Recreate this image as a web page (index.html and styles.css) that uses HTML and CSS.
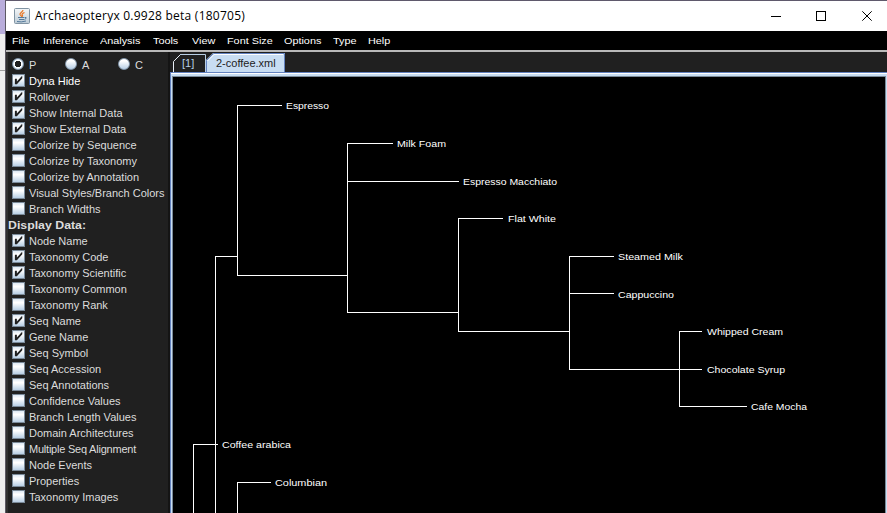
FILE: index.html
```
<!DOCTYPE html>
<html lang="en">
<head>
<meta charset="utf-8">
<title>Archaeopteryx 0.9928 beta (180705)</title>
<link rel="stylesheet" href="styles.css">
</head>
<body>
<div class="desktop"></div>
<div class="window">
  <header class="titlebar">
    <svg class="logo" width="16" height="16" viewBox="0 0 16 16">
      <defs><linearGradient id="lg" x1="0" y1="0" x2="0" y2="1"><stop offset="0" stop-color="#f4f6f7"/><stop offset="1" stop-color="#bccbd6"/></linearGradient></defs>
      <rect x=".5" y=".5" width="15" height="15" rx="1" fill="url(#lg)" stroke="#8194a3"/>
      <path d="M9 2C9 4 5.500 4.500 6 6.500L8 9M10.500 4.500C8 5.500 7.500 6.500 8.500 7.500L8 9" fill="none" stroke="#e87522" stroke-width="1.200"/>
      <path d="M4 9.500H10M5 11.500H10M3 13.500Q7 14.500 12 13M10.500 9.500Q13 9 12 10.500L10.500 11.500" fill="none" stroke="#557a9b"/>
    </svg>
    <span class="title">Archaeopteryx 0.9928 beta (180705)</span>
    <svg class="controls" width="110" height="12" viewBox="0 0 110 12" fill="none" stroke="#000">
      <path d="M4 6.500H14M49.500 1.500H58.500V10.500H49.500Z" shape-rendering="crispEdges"/>
      <path d="M95.300 1.300L104.700 10.700M104.700 1.300L95.300 10.700"/>
    </svg>
  </header>
  <nav class="menu"><span class="m1">File</span><span class="m2">Inference</span><span class="m3">Analysis</span><span class="m4">Tools</span><span class="m5">View</span><span class="m6">Font Size</span><span class="m7">Options</span><span class="m8">Type</span><span>Help</span></nav>
  <main class="body">
    <aside class="panel">
      <div class="radios"><label><i class="radio on"></i>P</label><label><i class="radio"></i>A</label><label><i class="radio"></i>C</label></div>
      <div class="row hot on"><i class="box"></i>Dyna Hide</div>
      <div class="row on"><i class="box"></i>Rollover</div>
      <div class="row on"><i class="box"></i>Show Internal Data</div>
      <div class="row on"><i class="box"></i>Show External Data</div>
      <div class="row"><i class="box"></i>Colorize by Sequence</div>
      <div class="row"><i class="box"></i>Colorize by Taxonomy</div>
      <div class="row"><i class="box"></i>Colorize by Annotation</div>
      <div class="row"><i class="box"></i>Visual Styles/Branch Colors</div>
      <div class="row"><i class="box"></i>Branch Widths</div>
      <h2>Display Data:</h2>
      <div class="row on"><i class="box"></i>Node Name</div>
      <div class="row on"><i class="box"></i>Taxonomy Code</div>
      <div class="row on"><i class="box"></i>Taxonomy Scientific</div>
      <div class="row"><i class="box"></i>Taxonomy Common</div>
      <div class="row"><i class="box"></i>Taxonomy Rank</div>
      <div class="row on"><i class="box"></i>Seq Name</div>
      <div class="row on"><i class="box"></i>Gene Name</div>
      <div class="row on"><i class="box"></i>Seq Symbol</div>
      <div class="row"><i class="box"></i>Seq Accession</div>
      <div class="row"><i class="box"></i>Seq Annotations</div>
      <div class="row"><i class="box"></i>Confidence Values</div>
      <div class="row"><i class="box"></i>Branch Length Values</div>
      <div class="row"><i class="box"></i>Domain Architectures</div>
      <div class="row tight"><i class="box"></i>Multiple Seq Alignment</div>
      <div class="row"><i class="box"></i>Node Events</div>
      <div class="row"><i class="box"></i>Properties</div>
      <div class="row"><i class="box"></i>Taxonomy Images</div>
    </aside>
    <section class="work">
      <div class="tabs">
        <div class="tab first"><svg width="36" height="18" viewBox="0 0 36 18" fill="none"><path d="M.5 18V7.500L7.500 .5" stroke="#e8eef5"/><path d="M7 .5H32.500V18" stroke="#b8cfe5"/></svg><span>[1]</span></div>
        <div class="tab current"><svg width="79" height="19" viewBox="0 0 79 19"><path d="M0 19V7L7 0H79V19Z" fill="#c8ddf2"/><path d="M.5 19V7.500L7.500 .5H78.500V19" fill="none" stroke="#6382bf"/><path d="M1.500 8L8 1.500H77" fill="none" stroke="#fff"/></svg><span>2-coffee.xml</span></div>
      </div>
      <div class="frame">
        <svg class="tree" width="712" height="436" viewBox="173 77 712 436">
          <path class="branches" d="M281.500 105.500H237.500V275.500H347.500M215.500 513V256.500H237.500M392.500 143.500H347.500V312.500H458.500M347.500 181.500H458.500M502.500 218.500H458.500V331.500H569.500M613.500 256.500H569.500V369.500H701.500M569.500 293.500H613.500M701.500 331.500H679.500V406.500H746.500M217.500 444.500H193.500V513M270.500 482.500H237.500V513"/>
          <g class="names">
            <text x="286" y="109" textLength="43" lengthAdjust="spacingAndGlyphs">Espresso</text>
            <text x="397" y="147" textLength="49" lengthAdjust="spacingAndGlyphs">Milk Foam</text>
            <text x="463" y="185" textLength="94" lengthAdjust="spacingAndGlyphs">Espresso Macchiato</text>
            <text x="508" y="222" textLength="48" lengthAdjust="spacingAndGlyphs">Flat White</text>
            <text x="618" y="260" textLength="65" lengthAdjust="spacingAndGlyphs">Steamed Milk</text>
            <text x="618" y="298" textLength="56" lengthAdjust="spacingAndGlyphs">Cappuccino</text>
            <text x="707" y="335" textLength="76" lengthAdjust="spacingAndGlyphs">Whipped Cream</text>
            <text x="707" y="373" textLength="78" lengthAdjust="spacingAndGlyphs">Chocolate Syrup</text>
            <text x="751" y="410" textLength="56" lengthAdjust="spacingAndGlyphs">Cafe Mocha</text>
            <text x="222" y="448" textLength="69" lengthAdjust="spacingAndGlyphs">Coffee arabica</text>
            <text x="275" y="486" textLength="52" lengthAdjust="spacingAndGlyphs">Columbian</text>
          </g>
        </svg>
      </div>
    </section>
  </main>
</div>
</body>
</html>
```
FILE: styles.css
```
* { box-sizing: border-box; }
body {
  margin: 0;
  width: 887px;
  height: 513px;
  overflow: hidden;
  display: flex;
  font-family: "Liberation Sans", Arial, sans-serif;
  background: #202020;
}
.desktop {
  width: 5px;
  background: linear-gradient(#b9addb 34px, #eeeeee 34px, #eeeeee 70px, #a0a0a0 70px, #a0a0a0 71px, #eeeeee 71px);
}
.window {
  flex: 1;
  height: 513px;
  border-top: 1px solid #5f596c;
  border-left: 1px solid #5c5963;
  display: flex;
  flex-direction: column;
}
.titlebar {
  height: 30px;
  flex: none;
  background: #fff;
  display: flex;
  align-items: center;
  padding: 0 10px 0 8px;
}
.title {
  margin-left: 5px;
  font: 12px/20px "Open Sans", "Noto Sans", sans-serif;
  letter-spacing: .24px;
  color: #000;
  white-space: nowrap;
}
.controls { margin-left: auto; }
.menu {
  height: 21px;
  flex: none;
  background: #000;
  border-bottom: 2px solid #c4c4c4;
  border-image: linear-gradient(#f0f0f0 50%, #b9b9b9 50%) 2;
  display: flex;
  padding-left: 6px;
  font-size: 9.5px;
  line-height: 20px;
  color: #fff;
  white-space: nowrap;
}
.menu span { transform: scaleX(1.14); transform-origin: left; }
.m1 { width: 31px; }
.m2 { width: 57px; }
.m3 { width: 53px; }
.m4 { width: 39px; }
.m5 { width: 35px; }
.m6 { width: 57px; }
.m7 { width: 49px; }
.m8 { width: 35px; }
.body { flex: 1; display: flex; min-height: 0; }
.panel {
  width: 164px;
  padding: 5px 0 0 6px;
  border-left: 2px solid #303030;
  border-right: 2px solid #141414;
  background: #202020;
  color: #dcdcdc;
  font-size: 11px;
  overflow: hidden;
}
.radios { height: 16px; display: flex; padding-left: 4px; line-height: 17px; }
.radios label { flex: none; width: 53px; display: flex; align-items: flex-start; gap: 5px; }
.radio {
  width: 12px;
  height: 12px;
  margin-top: 1px;
  border-radius: 50%;
  background: linear-gradient(#fff 20%, #b8cfe5);
  border: 1px solid #8296aa;
}
.radio.on { background: radial-gradient(circle, #202020 3px, #fff 3.500px, #c8ddf2 6px); }
.row {
  height: 16px;
  display: flex;
  align-items: flex-start;
  line-height: 16px;
  gap: 4px;
  padding-left: 4px;
  white-space: nowrap;
}
.tight { letter-spacing: -.22px; }
.hot { color: #fff; }
.radios, .row { margin-left: -6px; }
.box {
  width: 13px;
  height: 13px;
  margin-top: 1px;
  flex: none;
  border: 1px solid #7a8a99;
  background: linear-gradient(#dde8f3, #fff 30%, #fff 35%, #b8cfe5);
  display: flex;
}
.row.on .box::after {
  content: "";
  width: 9px;
  height: 9px;
  margin: 1px;
  background: #202020;
  clip-path: polygon(10% 30%, 32% 30%, 32% 62%, 85% 3%, 92% 3%, 92% 25%, 32% 92%, 10% 92%);
}
.panel h2 {
  margin: 0 0 0 -6px;
  height: 16px;
  width: 100px;
  font-size: 11px;
  line-height: 16px;
  transform: scaleX(1.12);
  transform-origin: left;
}
.work { flex: 1; min-width: 0; display: flex; flex-direction: column; background: #202020; }
.tabs { height: 20px; display: flex; padding-left: 3px; font-size: 11px; align-items: flex-end; }
.tab { display: grid; line-height: 18px; white-space: nowrap; }
.tab svg, .tab span { grid-area: 1 / 1; }
.first { width: 33px; height: 18px; color: #b8cfe5; }
.first span { padding-left: 9px; line-height: 19px; }
.current { width: 79px; height: 19px; color: #222; }
.current span { padding-left: 10px; line-height: 20px; }
.frame {
  flex: 1;
  min-height: 0;
  padding: 4px 0 0 2px;
  border-top: 1px solid #6382bf;
  border-left: 1px solid #6382bf;
  background: linear-gradient(#fff 1px, #c8ddf2 1px);
}
.tree {
  display: block;
  background: #000;
  outline: 1px solid #7a8a99;
}
.branches { fill: none; stroke: #fff; stroke-width: 1; shape-rendering: crispEdges; }
.names { fill: #fff; font-size: 9.5px; }
```
